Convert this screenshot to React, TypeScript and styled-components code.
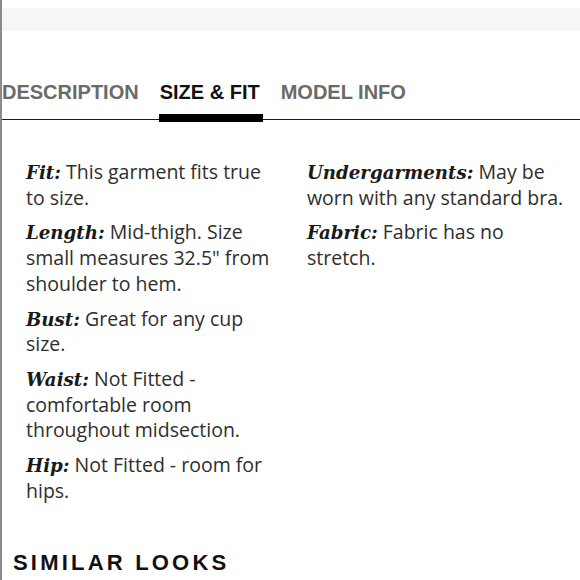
import React from "react";
import styled, { createGlobalStyle } from "styled-components";

const Global = createGlobalStyle`
  html, body { margin: 0; padding: 0; background: #ffffff; }
  body { font-family: "Open Sans", "Liberation Sans", Arial, sans-serif; }
`;

const Page = styled.div`
  width: 580px;
  height: 580px;
  box-sizing: border-box;
  border-left: 2px solid #8a8a8a;
  overflow: hidden;
  display: flex;
  flex-direction: column;
`;

const TopBand = styled.div`
  margin-top: 8px;
  height: 23px;
  background: #f6f6f9;
`;

const TabBar = styled.nav`
  margin-top: 49px;
  margin-left: -2px;
  padding-left: 2px;
  display: flex;
  gap: 21px;
  border-bottom: 1px solid #1a1a1a;
`;

const Tab = styled.div<{ $active?: boolean }>`
  position: relative;
  font-family: "Liberation Sans", Arial, sans-serif;
  font-weight: 700;
  font-size: 20px;
  color: ${(p) => (p.$active ? "#111" : "#6a6a6a")};
  padding-bottom: 15px;
  line-height: 24px;
  &::after {
    content: "";
    display: ${(p) => (p.$active ? "block" : "none")};
    position: absolute;
    left: -1px;
    right: -3px;
    bottom: -3px;
    height: 8px;
    background: #000;
  }
`;

const Columns = styled.div`
  display: grid;
  grid-template-columns: 256px 262px;
  column-gap: 25px;
  padding: 39px 0 0 24px;
`;

const Column = styled.div`
  display: flex;
  flex-direction: column;
  gap: 9px;
`;

const Item = styled.p`
  margin: 0;
  font-family: "Open Sans", "Liberation Sans", Arial, sans-serif;
  font-size: 19.5px;
  line-height: 25.7px;
  color: #2e2e2e;
`;

const Label = styled.span`
  font-family: "DejaVu Serif", "Liberation Serif", serif;
  font-style: italic;
  font-weight: 700;
  font-size: 18.2px;
  line-height: 0;
  color: #1a1a1a;
`;

const Heading = styled.h2`
  margin: auto 0 0 11px;
  padding-bottom: 4px;
  font-family: "Liberation Sans", Arial, sans-serif;
  font-weight: 700;
  font-size: 22px;
  letter-spacing: 3.2px;
  color: #111;
`;

const left = [
  ["Fit:", "This garment fits true to size."],
  ["Length:", "Mid-thigh. Size small measures 32.5\" from shoulder to hem."],
  ["Bust:", "Great for any cup size."],
  ["Waist:", "Not Fitted - comfortable room throughout midsection."],
  ["Hip:", "Not Fitted - room for hips."],
];

const right = [
  ["Undergarments:", "May be worn with any standard bra."],
  ["Fabric:", "Fabric has no stretch."],
];

export default function App() {
  return (
    <>
      <Global />
      <Page>
        <TopBand />
        <TabBar>
          <Tab>DESCRIPTION</Tab>
          <Tab $active>SIZE &amp; FIT</Tab>
          <Tab>MODEL INFO</Tab>
        </TabBar>
        <Columns>
          <Column>
            {left.map(([l, t]) => (
              <Item key={l}>
                <Label>{l}</Label> {t}
              </Item>
            ))}
          </Column>
          <Column>
            {right.map(([l, t]) => (
              <Item key={l}>
                <Label>{l}</Label> {t}
              </Item>
            ))}
          </Column>
        </Columns>
        <Heading>SIMILAR LOOKS</Heading>
      </Page>
    </>
  );
}
